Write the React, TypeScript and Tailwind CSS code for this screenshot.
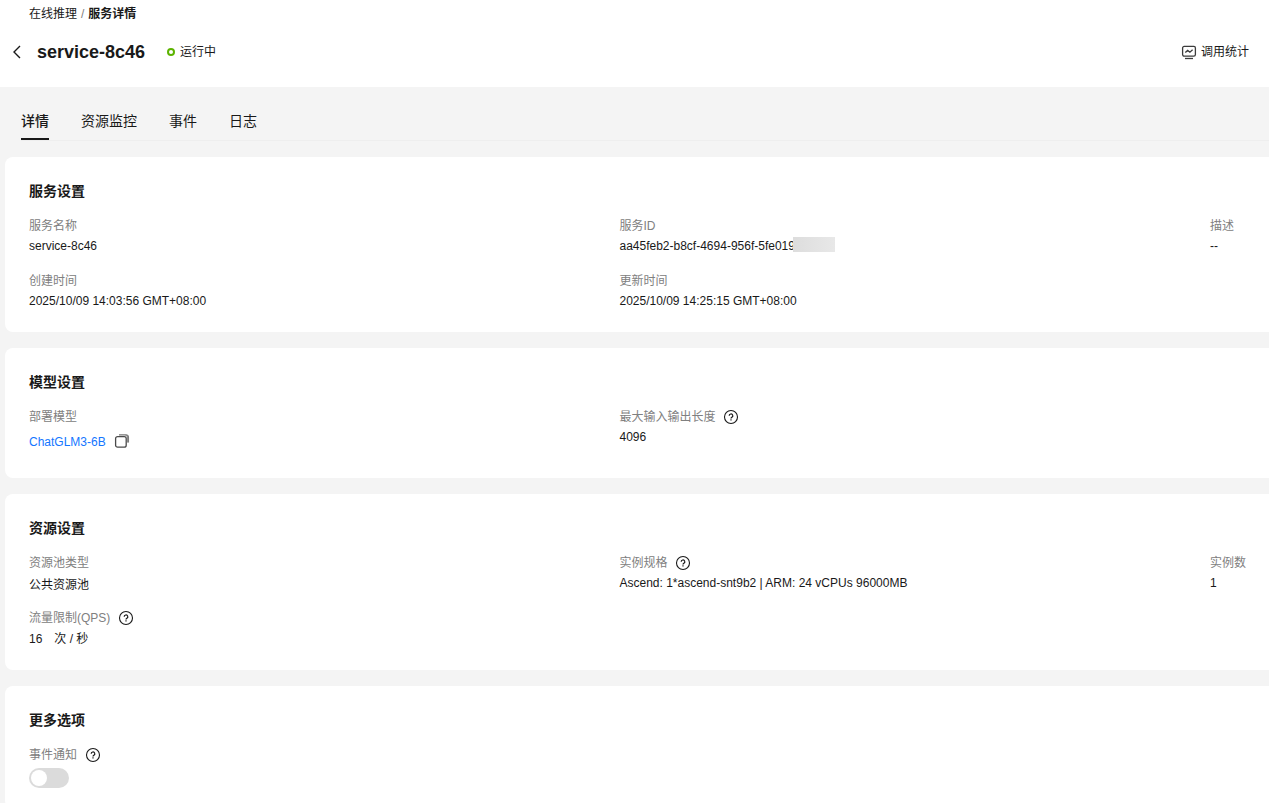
import type { ReactNode } from 'react';

const TABS = ['详情', '资源监控', '事件', '日志'];

function HelpIcon() {
  return (
    <button type="button" aria-label="帮助" className="shrink-0">
      <svg width="16" height="16" viewBox="0 0 16 16" fill="none" stroke="#191919">
        <circle cx="8" cy="8" r="6.5" strokeWidth="1.1" />
        <path d="M6.2 6.8a1.8 1.8 0 1 1 2.7 1.5c-.6.4-.9.7-.9 1.2" strokeWidth="1.2" />
        <path d="M8 10.3v1.2" strokeWidth="1.2" />
      </svg>
    </button>
  );
}

function CopyIcon() {
  return (
    <svg width="16" height="16" viewBox="0 0 16 16" fill="none" stroke="#4a4a4a" strokeWidth="1.3">
      <rect x="1.6" y="2.6" width="10.6" height="10.6" rx="2" />
      <path d="M5 .8h7a2.4 2.4 0 0 1 2.4 2.4v5.4" stroke="#777777" />
      <path d="M11.6 1.4a2 2 0 0 1 2 2v5" stroke="#8c8c8c" />
    </svg>
  );
}

function StatsIcon() {
  return (
    <svg width="16" height="16" viewBox="0 0 16 16" fill="none" stroke="#3c3c3c" strokeWidth="1.3">
      <rect x="1.6" y="2.4" width="12.8" height="9.8" rx="1.6" />
      <path d="M4.3 8.6l2.4-2.2 2.2 1.8 2.7-2.4" />
      <path d="M4 14.5h8" />
    </svg>
  );
}

function Card({ title, className = '', children }: { title: string; className?: string; children: ReactNode }) {
  return (
    <section className={`rounded-l-lg bg-white pt-6 pb-[21px] pl-6 ${className}`}>
      <h2 className="mb-[15px] text-sm leading-5 font-bold">{title}</h2>
      <dl className="grid grid-cols-[10fr_10fr_1fr] gap-y-[15px]">{children}</dl>
    </section>
  );
}

function Field({ label, help, children }: { label: string; help?: boolean; children: ReactNode }) {
  return (
    <div className="whitespace-nowrap">
      <dt className="flex h-5 items-center gap-2 text-[#808080]">
        {label}
        {help && <HelpIcon />}
      </dt>
      <dd>{children}</dd>
    </div>
  );
}

export default function App() {
  return (
    <div className="flex min-h-screen flex-col bg-[#f4f4f4] font-['Liberation_Sans','Noto_Sans_CJK_SC',sans-serif] text-xs leading-5 text-[#191919]">
      <header className="h-[87px] bg-white pt-1">
        <nav className="flex gap-1 pl-[29px]">
          <a href="#list">在线推理</a>
          <span className="text-[#808080]">/</span>
          <span className="font-bold">服务详情</span>
        </nav>
        <div className="mt-4 flex h-6 items-center pr-5 pl-[11px]">
          <button type="button" aria-label="返回" className="mr-[14px]">
            <svg width="12" height="14" viewBox="0 0 12 14" fill="none" stroke="#191919" strokeWidth="1.4">
              <path d="M9 1L3 7l6 6" />
            </svg>
          </button>
          <h1 className="text-lg leading-6 font-bold">service-8c46</h1>
          <span className="mr-[5px] ml-[22px] size-2 rounded-full border-2 border-[#5cb300]" />
          <span>运行中</span>
          <button type="button" className="ml-auto flex items-center gap-1">
            <StatsIcon />
            调用统计
          </button>
        </div>
      </header>

      <div role="tablist" className="mt-4 mb-4 ml-[21px] flex gap-8 border-b border-[#eeeeee] text-sm leading-5">
        {TABS.map((tab, i) => (
          <button
            key={tab}
            type="button"
            role="tab"
            aria-selected={i === 0}
            className={`h-[37px] border-b-2 pt-2 pb-[7px] ${i === 0 ? 'border-[#191919] font-medium' : 'border-transparent'}`}
          >
            {tab}
          </button>
        ))}
      </div>

      <main className="flex flex-1 flex-col gap-4 pl-[5px]">
        <Card title="服务设置">
          <Field label="服务名称">service-8c46</Field>
          <Field label="服务ID">
            <span className="relative">
              aa45feb2-b8cf-4694-956f-5fe019
              <span className="absolute -top-0.5 -right-10 h-[15px] w-[42px] bg-linear-to-r from-[#dddddd] to-[#e8e8e8]" />
            </span>
          </Field>
          <Field label="描述">--</Field>
          <Field label="创建时间">2025/10/09 14:03:56 GMT+08:00</Field>
          <Field label="更新时间">2025/10/09 14:25:15 GMT+08:00</Field>
        </Card>

        <Card title="模型设置">
          <Field label="部署模型">
            <div className="flex h-[30px] items-center gap-2">
              <a href="#model" className="text-[#1476ff]">ChatGLM3-6B</a>
              <button type="button" aria-label="复制">
                <CopyIcon />
              </button>
            </div>
          </Field>
          <Field label="最大输入输出长度" help>4096</Field>
        </Card>

        <Card title="资源设置">
          <Field label="资源池类型">
            <div className="h-5 leading-6">公共资源池</div>
          </Field>
          <Field label="实例规格" help>Ascend: 1*ascend-snt9b2 | ARM: 24 vCPUs 96000MB</Field>
          <Field label="实例数">1</Field>
          <Field label="流量限制(QPS)" help>
            <div className="flex h-[21px] items-center gap-3">
              <span>16</span>
              <span>次 / 秒</span>
            </div>
          </Field>
        </Card>

        <Card title="更多选项" className="flex-1">
          <Field label="事件通知" help>
            <label className="mt-[3px] block h-5 w-10">
              <input
                type="checkbox"
                role="switch"
                aria-label="事件通知"
                className="block h-5 w-10 appearance-none rounded-full bg-[#dbdbdb] p-[2px] before:block before:size-4 before:rounded-full before:bg-white checked:bg-[#191919] checked:before:ml-5"
              />
            </label>
          </Field>
        </Card>
      </main>
    </div>
  );
}
